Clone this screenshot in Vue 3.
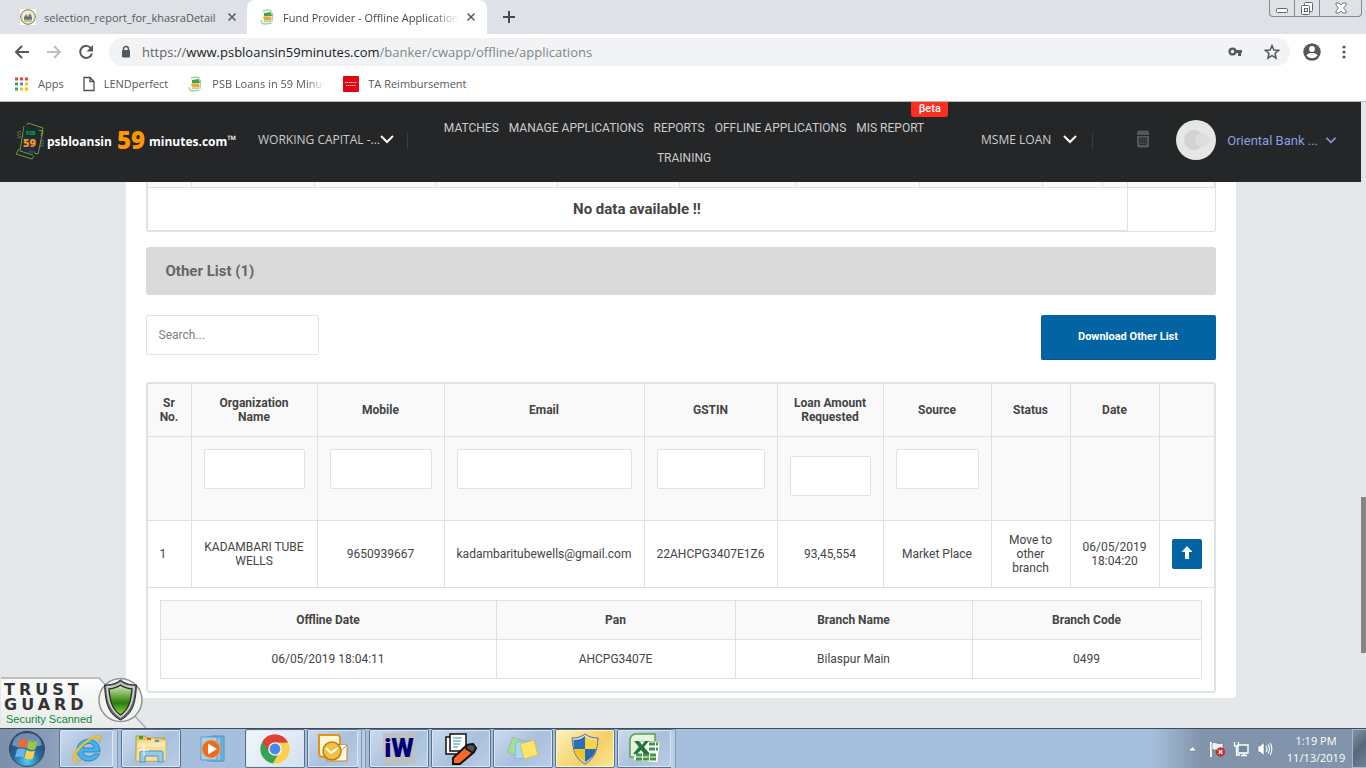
<script setup>
import { ref } from 'vue'

const search = ref('')
const topColumns = [44, 123, 121, 122, 122, 117, 123, 123, 60, 25, 87]
const columns = [
  { label: 'Sr No.', width: 44 },
  { label: 'Organization Name', width: 126, filter: true },
  { label: 'Mobile', width: 127, filter: true },
  { label: 'Email', width: 200, filter: true },
  { label: 'GSTIN', width: 133, filter: true },
  { label: 'Loan Amount Requested', width: 106, filter: true, low: true },
  { label: 'Source', width: 108, filter: true },
  { label: 'Status', width: 79 },
  { label: 'Date', width: 89 },
  { label: '', width: 55 },
]
const row = ['KADAMBARI TUBE WELLS', '9650939667', 'kadambaritubewells@gmail.com', '22AHCPG3407E1Z6', '93,45,554', 'Market Place', 'Move to other branch', '06/05/2019 18:04:20']
const detailColumns = [
  { label: 'Offline Date', value: '06/05/2019 18:04:11', width: 336 },
  { label: 'Pan', value: 'AHCPG3407E', width: 239 },
  { label: 'Branch Name', value: 'Bilaspur Main', width: 237 },
  { label: 'Branch Code', value: '0499', width: 229 },
]
const links = ['MATCHES', 'MANAGE APPLICATIONS', 'REPORTS', 'OFFLINE APPLICATIONS', 'MIS REPORT', 'TRAINING']
const px = (n) => ({ width: n + 'px' })
</script>

<template>
  <div class="screen">
    <header class="tabs">
      <div class="tab">
        <svg class="fav" viewBox="0 0 16 16"><rect width="16" height="16" fill="#fff" /><circle cx="8" cy="8" r="7.3" fill="#f3e9cc" stroke="#5d7d5c" /><path d="M4 11V8l2-3 2 2 2-3 2 4v3z" fill="#8b9292" /><path d="M4 9h8M5 7l3 3 3-4" stroke="#4e5f6c" fill="none" /><path d="M4 12h8" stroke="#b98d36" /></svg>
        <span class="tab-text">selection_report_for_khasraDetail</span>
        <button class="close" aria-label="Close tab"><svg viewBox="0 0 8 8"><path d="M.5.5l7 7M7.500.5l-7 7" /></svg></button>
      </div>
      <div class="tab active">
        <svg class="fav" viewBox="0 0 16 16"><path d="M4 2.500q5-3 9 0M2.500 11q-1 4 4 4l6-1" fill="none" stroke="#a5d38f" stroke-width="1.500" /><path d="M5 4l7-1 1 4-8 .5z" fill="#45a34b" /><path d="M4 8l8-.5.5 3.500L5 11.500z" fill="#f6a623" /><path d="M13.500 4l-.5 9" stroke="#8ccb76" /><path d="M5 12.500l7-.5" stroke="#9bd4cf" stroke-width="1.500" /></svg>
        <span class="tab-text fade">Fund Provider - Offline Applications</span>
        <button class="close" aria-label="Close tab"><svg viewBox="0 0 8 8"><path d="M.5.5l7 7M7.500.5l-7 7" /></svg></button>
      </div>
      <button class="new-tab" aria-label="New tab"><svg viewBox="0 0 12 12"><path d="M6 0v12M0 6h12" stroke="#45494d" stroke-width="2" /></svg></button>
      <div class="win">
        <button aria-label="Minimize"><svg width="12" height="14" viewBox="0 0 12 14"><rect x=".5" y="8.500" width="11" height="4" rx="1" fill="#fff" stroke="#62666a" /></svg></button>
        <button aria-label="Restore"><svg width="14" height="16" viewBox="0 0 14 16"><rect x="4.500" y="2.500" width="8" height="9" rx="1" fill="#fff" stroke="#62666a" /><rect x="1.500" y="5.500" width="8" height="9" rx="1" fill="#fff" stroke="#62666a" /><rect x="4.500" y="8.500" width="3" height="3" fill="#fff" stroke="#62666a" /></svg></button>
        <button class="wide" aria-label="Close"><svg width="12" height="12" viewBox="0 0 12 12"><path d="M1 1h3l2 2 2-2h3v2L8.500 6 11 9v2H8L6 9l-2 2H1V9l2.500-3L1 3z" fill="#fff" stroke="#777b7f" /></svg></button>
      </div>
    </header>

    <div class="toolbar">
      <div class="nav-btns">
        <button aria-label="Back"><svg viewBox="0 0 16 16"><path d="M15 8H2M8 2L2 8l6 6" fill="none" stroke="#55595d" stroke-width="2" /></svg></button>
        <button aria-label="Forward"><svg viewBox="0 0 16 16"><path d="M1 8h13M8 2l6 6-6 6" fill="none" stroke="#bcbec0" stroke-width="2" /></svg></button>
        <button aria-label="Reload"><svg viewBox="0 0 16 16"><path d="M13.200 4.500A6 6 0 1 0 14 9.500" fill="none" stroke="#55595d" stroke-width="2" /><path d="M15 1v6.500H8.500z" fill="#55595d" /></svg></button>
      </div>
      <div class="address">
        <svg class="lock" viewBox="0 0 10 13"><path d="M2.500 5V3.500a2.500 2.500 0 0 1 5 0V5" fill="none" stroke="#55595d" stroke-width="1.500" /><rect x="1" y="4.500" width="8" height="7.500" rx="1" fill="#55595d" /></svg>
        <div class="url" role="textbox" aria-label="Address" contenteditable="true" spellcheck="false"><span class="scheme">https://</span><span class="host">www.psbloansin59minutes.com</span><span>/banker/cwapp/offline/applications</span></div>
        <svg class="key" viewBox="0 0 15 10"><circle cx="4.500" cy="4.500" r="2.900" fill="none" stroke="#55595d" stroke-width="2.400" /><path d="M7 3h7v3h-1v3h-3V6H7z" fill="#55595d" /></svg>
        <svg class="star" viewBox="0 0 16 16"><path d="M8 1.600l1.900 4.400 4.700.4-3.600 3.100 1.100 4.700L8 11.700l-4.100 2.500L5 9.500 1.400 6.400l4.700-.4z" fill="none" stroke="#55595d" stroke-width="1.500" /></svg>
      </div>
      <button class="person" aria-label="Profile"><svg viewBox="0 0 18 18"><circle cx="9" cy="9" r="8.700" fill="#55595d" /><circle cx="9" cy="6" r="2.900" fill="#fff" /><path d="M3.500 12.500c1-2.300 3.300-2.500 5.500-2.500s4.500.2 5.500 2.500c-1.300 1.700-3.300 2.600-5.500 2.600s-4.200-.9-5.500-2.600z" fill="#fff" /></svg></button>
      <button class="dots" aria-label="Menu"><svg viewBox="0 0 4 14"><circle cx="2" cy="2" r="1.600" /><circle cx="2" cy="7" r="1.600" /><circle cx="2" cy="12" r="1.600" /></svg></button>
    </div>

    <nav class="bookmarks" aria-label="Bookmarks">
      <a href="#"><svg width="14" height="14" viewBox="0 0 14 14"><path d="M0 2h13" stroke="#ea4335" stroke-width="3" stroke-dasharray="3 2" /><path d="M0 7h3" stroke="#34a853" stroke-width="3" /><path d="M5 7h3" stroke="#4285f4" stroke-width="3" /><path d="M10 7h3" stroke="#fbbc05" stroke-width="3" /><path d="M0 12h3" stroke="#34a853" stroke-width="3" /><path d="M5 12h8" stroke="#fbbc05" stroke-width="3" stroke-dasharray="3 2" /></svg><span>Apps</span></a>
      <a href="#"><svg width="12" height="16" viewBox="0 0 12 16"><path d="M1 1.500h6l4 4v9H1zM7 1.500v4h4" fill="none" stroke="#4c5054" stroke-width="1.300" /></svg><span>LENDperfect</span></a>
      <a href="#"><svg width="16" height="16" viewBox="0 0 16 16"><path d="M4 2.500q5-3 9 0M2.500 11q-1 4 4 4l6-1" fill="none" stroke="#a5d38f" stroke-width="1.500" /><path d="M5 4l7-1 1 4-8 .5z" fill="#45a34b" /><path d="M4 8l8-.5.5 3.500L5 11.500z" fill="#f6a623" /><path d="M13.500 4l-.5 9" stroke="#8ccb76" /><path d="M5 12.500l7-.5" stroke="#9bd4cf" stroke-width="1.500" /></svg><span class="psb fade">PSB Loans in 59 Minutes</span></a>
      <a href="#"><svg width="16" height="16" viewBox="0 0 16 16"><rect width="16" height="16" rx="1" fill="#e30613" /><path d="M2 6.500h12M3 9.500h10" stroke="#fff" stroke-opacity=".75" stroke-dasharray="1.500 .5" /></svg><span>TA Reimbursement</span></a>
    </nav>

    <div class="viewport">
      <div class="page">
        <header class="site">
          <a class="brand" href="#">
            <svg class="brand-mark" viewBox="0 0 30 38"><g fill="none" stroke="#6ba13d" stroke-width="1"><path d="M12 3l1-2 15 5-2 8M4 27L1 32l16 5 2-3" /><path d="M23 8l5 1-5 23-4-1M9 4l-4 25 13 4" /></g><g stroke="#a8b35a" stroke-dasharray="1 1.500"><path d="M3 10v7M5 9v8M26 19v7M28 18v7" /></g><path d="M9 5l14 2-2 24-14-2z" fill="#27294a" /><path d="M10 5l14 2-1 9-14-1z" fill="#173128" /><text x="11" y="13" font-size="5" font-weight="700" fill="#0cac50">PSB</text><text x="8" y="25" font-size="11" font-weight="800" fill="#f59a12">59</text><path d="M14 30h6" stroke="#287d4a" /></svg>
            <span class="word">psbloansin</span><span class="num">59</span><span class="word">minutes.com</span><span class="tm">™</span>
          </a>
          <button class="drop product"><span>WORKING CAPITAL -...</span><svg viewBox="0 0 14 9"><path d="M1 1l6 6 6-6" /></svg></button>
          <i class="rule"></i>
          <nav class="menu">
            <a v-for="l in links" :key="l" href="#">{{ l }}<span v-if="l === 'MIS REPORT'" class="beta">βeta</span></a>
          </nav>
          <button class="drop loan"><span>MSME LOAN</span><svg viewBox="0 0 14 9"><path d="M1 1l6 6 6-6" /></svg></button>
          <i class="rule"></i>
          <button class="calc" aria-label="Calculator"><svg viewBox="0 0 12 18"><path d="M2 .5h8q2 0 2 2V5H0V2.500q0-2 2-2zM0 6h12v9.500q0 2-2 2H2q-2 0-2-2z" fill="#55575a" /><path d="M2.500 8h7v6.500h-7zM5 8v6.500M7.200 8v6.500M2.500 10h7M2.500 12h7" fill="none" stroke="#252628" stroke-width=".8" /></svg></button>
          <button class="user">
            <svg class="avatar" viewBox="0 0 40 40"><circle cx="20" cy="20" r="20" fill="#e5e7e4" /><circle cx="18" cy="20" r="10" fill="#d2d3d2" /><circle cx="26" cy="20" r="7" fill="#dcdddc" /></svg>
            <span>Oriental Bank ...</span>
            <svg class="chev" viewBox="0 0 10 7"><path d="M0.500.8l4.500 4.500L9.500.8" fill="none" stroke="#8c9be4" stroke-width="1.600" /></svg>
          </button>
        </header>

        <main class="panel">
          <div class="frame first">
            <table>
              <colgroup><col v-for="(w, i) in topColumns" :key="i" :style="px(w)" /></colgroup>
              <thead><tr class="cut"><th v-for="(w, i) in topColumns" :key="i"></th></tr></thead>
              <tbody><tr><td colspan="10" class="none">No data available !!</td><td class="blank"></td></tr></tbody>
            </table>
          </div>

          <h2>Other List (1)</h2>

          <div class="actions">
            <input v-model="search" type="text" class="search" placeholder="Search..." aria-label="Search" />
            <button class="download">Download Other List</button>
          </div>

          <div class="frame">
            <table>
              <colgroup><col v-for="c in columns" :key="c.label" :style="px(c.width)" /></colgroup>
              <thead>
                <tr class="heads"><th v-for="c in columns" :key="c.label">{{ c.label }}</th></tr>
                <tr class="filters">
                  <td v-for="c in columns" :key="c.label" :class="{ low: c.low }"><input v-if="c.filter" type="text" :aria-label="c.label" /></td>
                </tr>
              </thead>
              <tbody>
                <tr class="data">
                  <td class="serial">1</td>
                  <td v-for="v in row" :key="v" :class="{ tight: v.includes('@') || v.startsWith('22A') }">{{ v }}</td>
                  <td><button class="up" aria-label="Move up"><svg viewBox="0 0 12 14"><path d="M6 0l5.500 6H8v7H4V6H.5z" fill="#fff" /></svg></button></td>
                </tr>
                <tr>
                  <td :colspan="columns.length" class="nest">
                    <table class="detail">
                      <colgroup><col v-for="d in detailColumns" :key="d.label" :style="px(d.width)" /></colgroup>
                      <thead><tr><th v-for="d in detailColumns" :key="d.label">{{ d.label }}</th></tr></thead>
                      <tbody><tr><td v-for="d in detailColumns" :key="d.label">{{ d.value }}</td></tr></tbody>
                    </table>
                  </td>
                </tr>
              </tbody>
            </table>
          </div>
        </main>
      </div>
      <div class="scroll"><i></i></div>

      <a class="trust" href="#">
        <svg class="trust-art" viewBox="0 0 148 52">
          <defs>
            <linearGradient id="shieldGreen" x1="0" y1="0" x2="0" y2="1"><stop offset="0" stop-color="#d8e9c6" /><stop offset=".45" stop-color="#559a2c" /><stop offset=".6" stop-color="#2b7a10" /><stop offset="1" stop-color="#8fdc3a" /></linearGradient>
            <linearGradient id="badgeBack" x1="0" y1="0" x2="0" y2="1"><stop offset="0" stop-color="#fdfdfd" /><stop offset="1" stop-color="#e9ebea" /></linearGradient>
          </defs>
          <path d="M1 2h98l47 50H1z" fill="url(#badgeBack)" /><path d="M1 2h98l47 50" fill="none" stroke="#aaaeb0" stroke-width="1.500" />
          <circle cx="120.500" cy="24" r="21.500" fill="#f2f3f2" stroke="#929596" stroke-width="1.500" />
          <g transform="translate(0 1)">
            <path d="M120.500 3c5 4 10 5 16 5-1 15-2 28-16 35-14-7-15-20-16-35 6 0 11-1 16-5z" fill="#606563" stroke="#252928" stroke-width="1" />
            <path d="M120.500 5.500c4 3 9 4 14 4-1 13-3 24-14 31-11-7-13-18-14-31 5 0 10-1 14-4z" fill="#bfc4c0" stroke="#fff" stroke-width=".6" />
            <path d="M120.500 8c4 3 8 3.500 11.500 4-1 11-2.500 20-11.500 26-9-6-10.500-15-11.500-26 3.500-.5 7.500-1 11.500-4z" fill="url(#shieldGreen)" stroke="#24301c" stroke-width="1.300" />
          </g>
        </svg>
        <span class="trust-text"><b>TRUST</b><b>GUARD</b><em>Security Scanned</em></span>
      </a>
    </div>

    <footer class="taskbar">
      <button class="start" aria-label="Start"><svg viewBox="0 0 38 38">
        <defs><radialGradient id="orb" cx=".5" cy=".85" r=".8"><stop offset="0" stop-color="#53cdf4" /><stop offset=".5" stop-color="#24669a" /><stop offset="1" stop-color="#26466e" /></radialGradient></defs>
        <circle cx="19" cy="19" r="17.500" fill="url(#orb)" stroke="#2f4a68" /><path d="M4 15C6 6 12 3 19 3s13 3 15 12c-8 3-22 4-30 0z" fill="#c9e0f0" opacity=".45" />
        <path d="M11.500 10q4.500-2 8.500 0l-2 8q-4-2-8.500 0z" fill="#ee6a32" /><path d="M21 10.500q4 2.500 8.500.5l-2 8q-4 2-8.500-.5z" fill="#98c840" /><path d="M9 19.500q4.500-2 8.500 0l-2 8q-4-2-8.500 0z" fill="#69b5ed" /><path d="M18.500 20q4 2.500 8.500.5l-2 8q-4 2-8.500-.5z" fill="#fbd14b" />
      </svg></button>
      <button class="task stacked" aria-label="Internet Explorer"><svg viewBox="0 0 32 32"><path d="M29 19H12c1 5.500 9 5.500 11 2h5.500C25 31 7 31 6 17 6 3 29 2 29 19zm-17-4h11c0-6-10-6-11 0z" fill="#45b3ea" stroke="#1978b8" stroke-width=".8" /><path d="M5 29c-6 0-3-11 6-18C20 3 30 0 30 4c0 2-1 4-2 6 1-3 1-5-2-5C18 5 0 22 6 27c2 1 4 0 6-1-2 2-5 3-7 3z" fill="#f5c62d" stroke="#cf9a12" stroke-width=".4" /></svg></button>
      <button class="task" aria-label="Explorer"><svg viewBox="0 0 32 32"><path d="M1 3h9l2 2h18v23H1z" fill="#e6ca6c" stroke="#b99843" /><path d="M4 3h4v3H4z" fill="#3d9e3c" /><path d="M2 7h8l2-2h7l2 2h10v21H1z" fill="#f5df96" stroke="#cdb15b" stroke-width=".6" /><path d="M12 5h4v2h-4z" fill="#d65636" /><path d="M20 7h4v2h-4z" fill="#4a91d5" /><path d="M2 11h28M2 13h28" stroke="#fff4c4" /><path d="M5 29V20q0-2 2-2h19q2 0 2 2v9h-5v-6H10v6z" fill="#91cceb" stroke="#5293bd" /><path d="M9 11v12M4 17h10" stroke="#fff" /></svg></button>
      <button class="task bare" aria-label="Media Player"><svg viewBox="0 0 32 32"><path d="M15 3h12v25H15z" fill="#73b6df" stroke="#4d91c0" /><path d="M10 4h14v24H10z" fill="#8cc4e6" stroke="#5497c4" /><path d="M4 4h16v23H4z" fill="#a7d2ed" stroke="#5b9fcc" /><circle cx="14" cy="16" r="9" fill="#ec6c1b" stroke="#f8a15b" /><path d="M11 10.500v11l9-5.500z" fill="#fff" /></svg></button>
      <button class="task lit" aria-label="Chrome"><svg viewBox="0 0 32 32"><path d="M16 16L3.500 8.500A14.500 14.500 0 0 1 29 9.500L16 10z" fill="#de4236" /><path d="M3.500 8.500A14.500 14.500 0 0 0 14 30.500l6.500-10.500L16 16z" fill="#39a355" /><path d="M29 9.500A14.500 14.500 0 0 1 14 30.500l7-12.500-3-8.500z" fill="#fcd04b" /><path d="M16 9.500h13a14.500 14.500 0 0 0-25.500-1L10 19z" fill="#de4236" /><circle cx="16" cy="16" r="6.800" fill="#f5f5f5" /><circle cx="16" cy="16" r="5.400" fill="#4687f0" /></svg></button>
      <button class="task stacked two" aria-label="Outlook"><svg viewBox="0 0 32 32"><path d="M2 2h18q3 0 3 3v19H6q-4 0-4-4z" fill="#fff7da" stroke="#e19418" stroke-width="2" /><path d="M10 12h20v16H10z" fill="#fff8e7" stroke="#bc872f" /><path d="M10 12l10 9 10-9" fill="#fff" stroke="#c38c34" /><circle cx="15" cy="18" r="9" fill="#f5bf3e" stroke="#c17c10" stroke-width="1.500" /><path d="M9 15l5 5 7-5" fill="none" stroke="#fff" stroke-width="2" /></svg></button>
      <button class="task" aria-label="iW"><span class="iw">iW</span></button>
      <button class="task" aria-label="Notes"><svg viewBox="0 0 32 32"><path d="M1 4h14v17H1z" fill="#fff" stroke="#111" stroke-width="1.500" /><path d="M5 1h16v17H5z" fill="#fff" stroke="#111" stroke-width="1.500" /><path d="M8 5h9M8 8h8M8 11h7M8 14h5" stroke="#438f9d" stroke-width="1.200" /><path d="M8 25l14-13 6-1 3 4-2 4-14 12H8z" fill="#fa6729" stroke="#111" stroke-width="2" /><path d="M22 12l6-1 3 4-3 5-7-4z" fill="#514f51" stroke="#111" stroke-width="1.500" /></svg></button>
      <button class="task" aria-label="Sticky Notes"><svg viewBox="0 0 32 32"><path d="M6 4l13 5-6 15-13-5z" fill="#a6dc9b" stroke="#82bd7f" stroke-width=".7" /><path d="M9 9l13-1 1 16-15 2z" fill="#a9daf5" stroke="#78b4d8" stroke-width=".7" /><path d="M13 11l14-4 4 15-14 4z" fill="#fbe36c" stroke="#d5b83c" stroke-width=".7" /></svg></button>
      <button class="task gold" aria-label="Security"><svg viewBox="0 0 32 32"><path d="M16 1c4 3 8 4 13 4-1 13-3 20-13 26C6 25 4 18 3 5c5 0 9-1 13-4z" fill="#ddd" stroke="#626b76" /><path d="M16 3v13H5C4.500 12 4.500 10 4.500 7c5 0 8-1 11.500-4z" fill="#2b6fbb" /><path d="M16 3c3.500 3 7 4 11.500 4 0 3 0 5-.5 9H16z" fill="#f8d444" /><path d="M5 16h11v13C9 25 6 21 5 16z" fill="#f4c52a" /><path d="M16 16h11c-1 5-4 9-11 13z" fill="#246ab6" /></svg></button>
      <button class="task stacked" aria-label="Excel"><svg viewBox="0 0 32 32"><path d="M7 1h19v23H1V8q0-7 6-7z" fill="#e6f4dd" stroke="#58a345" stroke-width="1.500" /><path d="M12 8l19 1-2 21-25-3 2-7z" fill="#fff" stroke="#b5c4b6" /><path d="M20 11h9M20 16h9M7 22h21M7 26h20" stroke="#3f9548" stroke-width="3" stroke-dasharray="6 1" /><path d="M5 8h5l3 4 3-4h4l-5 6 6 7h-6l-3-4-4 4H4l6-7z" fill="#257337" /></svg></button>
      <div class="tray">
        <svg class="caret" viewBox="0 0 9 6"><path d="M.5 5l4-4.500 4 4.500z" fill="#fff" stroke="#536478" stroke-width=".5" /></svg>
        <svg viewBox="0 0 16 16"><path d="M2 1v15" stroke="#fff" stroke-width="2" /><path d="M3 2c4-2 5 2 11 0v7c-5 2-7-1-11 0z" fill="#eef2f5" stroke="#526174" stroke-width=".6" /><circle cx="11.500" cy="11" r="4.300" fill="#d52f2a" stroke="#a51c1b" stroke-width=".6" /><path d="M9.700 9.200l3.600 3.600m0-3.600l-3.600 3.600" stroke="#fff" stroke-width="1.300" /></svg>
        <svg viewBox="0 0 16 16"><path d="M5 4h10v8H5zM8 14.500h6M11 12v2" fill="#71869f" stroke="#fff" stroke-width="1.400" /><path d="M1.500 1v4h4V1M3.500 5v9H7" fill="none" stroke="#fff" stroke-width="1.300" /></svg>
        <svg viewBox="0 0 16 16"><path d="M1 5h2l4-3.500v13L3 11H1z" fill="#fff" stroke="#53647a" stroke-width=".5" /><path d="M9 5q2 3 0 6M11 3.500q3 4.500 0 9M13.200 2q3.300 6 0 12" fill="none" stroke="#fff" stroke-width="1.100" /></svg>
        <time>1:19 PM<br />11/13/2019</time>
        <button class="peek" aria-label="Show desktop"></button>
      </div>
    </footer>
  </div>
</template>

<style>
body { margin: 0; overflow: hidden; }
</style>

<style scoped>
* { box-sizing: border-box; }
button { border: 0; background: none; padding: 0; margin: 0; font: inherit; color: inherit; display: flex; align-items: center; justify-content: center; cursor: pointer; }
a { color: inherit; text-decoration: none; }
svg { display: block; flex: none; }
.screen { height: 100vh; display: flex; flex-direction: column; background: #fff; font-family: "Open Sans", "Noto Sans", sans-serif; font-size: 11px; color: #55595d; }

.tabs { display: flex; height: 34px; flex: none; background: #dee1e6; }
.tab { display: flex; align-items: center; width: 240px; padding: 0 12px; gap: 8px; }
.tab:first-child { width: 247px; padding-left: 20px; padding-right: 11px; }
.tab.active { background: #fff; border-radius: 8px 8px 0 0; color: #45494d; }
.tab-text { flex: 1; overflow: hidden; white-space: nowrap; }
.fade { overflow: hidden; white-space: nowrap; mask-image: linear-gradient(to right, #000 85%, transparent); }
.fav { width: 16px; height: 16px; }
.close { width: 8px; height: 16px; }
.close svg { width: 8px; height: 8px; fill: none; stroke: #55595d; stroke-width: 1.5; }
.new-tab { width: 44px; }
.new-tab svg { width: 12px; height: 12px; }
.win { display: flex; margin-left: auto; margin-right: 4px; height: 17px; border: 1px solid #85898d; border-top: 0; border-radius: 0 0 4px 4px; }
.win button { width: 25px; align-items: flex-start; border-right: 1px solid #85898d; }
.win .wide { width: 41px; border: 0; padding-top: 2px; }

.toolbar { display: flex; align-items: center; height: 36px; flex: none; }
.nav-btns { display: flex; width: 109px; padding-left: 14px; gap: 16px; }
.nav-btns svg { width: 16px; height: 16px; }
.address { flex: 1; display: flex; align-items: center; height: 28px; padding: 0 10px 0 12px; background: #f1f3f4; border-radius: 14px; }
.lock { width: 10px; height: 14px; margin-right: 11px; }
.url { flex: 1; font-size: 13px; outline: 0; color: #80868b; white-space: nowrap; }
.scheme { color: #5f6368; }
.host { color: #202124; }
.key { width: 15px; height: 10px; margin-right: 21px; }
.star { width: 16px; height: 16px; }
.person { margin-left: 13px; }
.person svg { width: 18px; height: 18px; }
.dots { margin: 0 20px 0 21px; }
.dots svg { width: 4px; height: 14px; fill: #55595d; }

.bookmarks { display: flex; align-items: center; gap: 19px; height: 32px; flex: none; padding: 0 15px 4px; border-bottom: 1px solid #b3bab9; }
.bookmarks a { display: flex; align-items: center; gap: 9px; }
.bookmarks .psb { width: 112px; }

.viewport { position: relative; flex: 1; min-height: 0; display: flex; overflow: hidden; background: #e4e8eb; font-family: Roboto, sans-serif; color: #444; }
.page { flex: 1; min-width: 0; }
.scroll { width: 5px; padding-top: 395px; }
.scroll i { display: block; height: 156px; background: #858585; }

.site { display: flex; align-items: center; height: 80px; padding: 0 25px 4px 15px; background: #252628; color: #ccc; font-size: 12px; font-family: "Open Sans", sans-serif; }
.brand { display: flex; align-items: center; flex: none; width: 243px; padding-top: 2px; color: #fff; font-weight: 700; }
.brand-mark { width: 30px; height: 38px; margin-right: 2px; }
.word { font-size: 12px; }
.num { margin: 0 4px 3px 5px; font-size: 24px; line-height: 30px; font-weight: 800; color: #ff9800; }
.tm { font-size: 12px; line-height: 24px; align-self: flex-start; margin-top: 6px; }
.drop { gap: 12px; padding-bottom: 2px; white-space: nowrap; }
.drop svg { width: 14px; height: 9px; fill: none; stroke: #fff; stroke-width: 2; }
.product { width: 134px; gap: 0; justify-content: flex-start; }
.rule { width: 1px; height: 17px; margin: 0 15px; background: #3a3b3d; }
.menu { flex: 1; display: flex; flex-wrap: wrap; justify-content: center; column-gap: 10px; height: 60px; margin: 5px 46px 0 10px; font-family: Roboto, sans-serif; font-size: 12px; line-height: 30px; }
.menu a { position: relative; white-space: nowrap; }
.beta { position: absolute; left: 55px; top: -11px; width: 37px; height: 15px; text-align: center; background: #ff2f1f; color: #fff; font-size: 11px; line-height: 13px; font-weight: 500; border-radius: 0 0 3px 3px; }
.calc { margin: 0 27px 2px 29px; }
.calc svg { width: 12px; height: 18px; }
.user { font-family: Roboto, sans-serif; font-size: 13px; color: #8c9fe0; white-space: nowrap; }
.avatar { width: 40px; height: 40px; margin-right: 11px; }
.chev { width: 10px; height: 7px; margin-left: 8px; }

.panel { max-width: 1110px; margin: 0 auto; padding: 0 20px 5px; background: #fff; border-radius: 0 0 3px 3px; }
.frame { border: 1px solid #dfe4e6; border-radius: 3px; }
.first { border-top: 0; border-radius: 0 0 3px 3px; }
table { width: 100%; table-layout: fixed; border-collapse: collapse; font-size: 12px; line-height: 14px; }
th, td { border: 1px solid #dde1e2; padding: 12px; text-align: center; vertical-align: middle; }
th { font-weight: 700; }
th, .filters td { background: #f9f9f9; }
.first .cut th { height: 5px; padding: 0; border-top: 0; }
.first td { height: 43px; padding: 0; }
.first .none { font-size: 15px; font-weight: 700; }
.first .blank { border-right: 0; border-bottom: 0; }
h2 { margin: 15px 0 20px; padding: 0 20px; line-height: 48px; font-size: 15px; font-weight: 700; color: #666; background: #dadada; border-radius: 3px; }
.actions { display: flex; justify-content: space-between; align-items: flex-start; margin-bottom: 22px; }
input { border: 1px solid #dde4e3; border-radius: 2px; background: #fff; height: 40px; font: 12px Roboto, sans-serif; color: #444; display: block; outline: 0; }
.search { width: 173px; padding: 0 12px; }
.search::placeholder { color: #808080; }
.download { width: 175px; height: 45px; background: #0264a2; border-bottom: 1px solid #01588f; border-radius: 2px; color: #fff; font-size: 11px; font-weight: 700; }
.heads th { height: 53px; padding: 0 11px; }
.filters td { height: 84px; vertical-align: top; }
.filters .low { padding-top: 19px; }
.filters input { width: 100%; }
.data td { height: 67px; padding: 0 12px; }
.data .tight { padding: 0; white-space: nowrap; }
.data .serial { text-align: left; }
.up { width: 30px; height: 30px; padding-bottom: 2px; background: #0264a2; border-radius: 2px; }
.up svg { width: 12px; height: 14px; }
.detail th, .detail td { height: 39px; padding: 0 12px; }

.trust { position: absolute; left: 0; bottom: 0; width: 148px; height: 52px; }
.trust-art { width: 148px; height: 52px; }
.trust-text { position: absolute; left: 4px; top: 6px; display: flex; flex-direction: column; font-family: "DejaVu Sans", sans-serif; color: #333; }
.trust-text b { font-size: 16px; line-height: 15px; letter-spacing: 4px; }
.trust-text em { margin: 0 2px; font: 11px "Liberation Sans", sans-serif; line-height: 14px; color: #0a8a3d; white-space: nowrap; }

.taskbar { display: flex; height: 40px; flex: none; border-top: 1px solid #3d4b5d; background: linear-gradient(to right, #7d90aa 0, #8b9fba 55px, #a6bfdd 75px, #a6bfdd calc(100% - 215px), #8294ab calc(100% - 165px), #8294ab 100%); }
.start { width: 54px; flex: none; }
.start svg { width: 38px; height: 38px; }
.task { position: relative; width: 60px; height: 39px; margin-right: 2px; flex: none; border: 1px solid #56708d; border-radius: 2px; background: linear-gradient(135deg, #cbdbed, #a9c0dc 55%, #b9cee5); box-shadow: inset 0 0 0 1px #dae7f4; }
.start + .task { margin-left: 5px; }
.task svg { width: 32px; height: 32px; }
.bare { border-color: transparent; background: none; box-shadow: none; }
.lit { background: linear-gradient(135deg, #f3f7fb, #d3e0ef); }
.gold { background: linear-gradient(135deg, #fff3b8, #f3cf69 60%, #fbe897); box-shadow: inset 0 0 0 1px #fff5c7; }
.stacked { width: 55px; margin-right: 7px; }
.stacked::after { content: ""; position: absolute; left: 100%; top: -1px; width: 4px; height: 39px; border: 1px solid #7f98b5; border-left: 0; border-radius: 0 2px 2px 0; background: #bacde3; }
.two { width: 52px; margin-right: 10px; }
.two::after { width: 7px; background: linear-gradient(to right, #bacde3 3px, #7f98b5 3px, #7f98b5 4px, #bacde3 4px); }
.iw { width: 32px; height: 31px; background: #c0c0c0; color: #00007c; font: 900 26px/31px Roboto, sans-serif; display: flex; justify-content: center; }
.tray { display: flex; align-items: center; gap: 8px; margin-left: auto; color: #fff; }
.tray svg { width: 16px; height: 16px; }
.tray .caret { width: 9px; height: 6px; margin-right: 4px; }
.tray time { width: 68px; margin-left: 1px; text-align: center; font-size: 11px; line-height: 17px; }
.peek { width: 14px; height: 39px; margin-left: -6px; border: 1px solid #a9b7c6; border-right: 0; background: linear-gradient(135deg, #8493a5, #57687c 50%, #718297); }
</style>
